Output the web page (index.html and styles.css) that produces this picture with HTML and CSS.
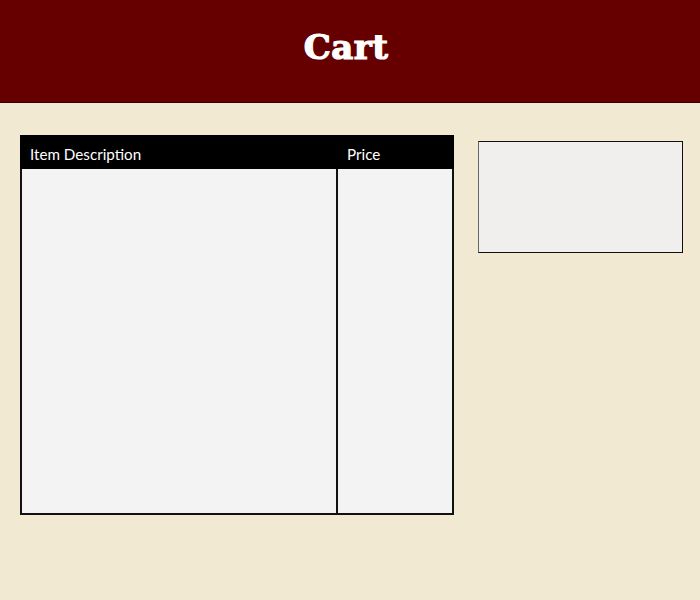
FILE: index.html
```html
<!DOCTYPE html>
<html>
<head>
<meta charset="utf-8">
<link rel="stylesheet" href="styles.css">
</head>
<body>
<header class="top">
  <h1 class="title">Cart</h1>
</header>
<main class="content">
  <table class="cart">
    <thead>
      <tr>
        <th class="desc">Item Description</th>
        <th class="price">Price</th>
      </tr>
    </thead>
    <tbody>
      <tr>
        <td class="desc"></td>
        <td class="price"></td>
      </tr>
    </tbody>
  </table>
  <div class="summary"></div>
</main>
</body>
</html>
```
FILE: styles.css
```css
html, body {
  margin: 0;
  padding: 0;
  background: #f2e9d2;
  height: 100%;
}
.top {
  height: 102px;
  background: #660000;
  border-bottom: 1px solid #3a0000;
  display: flex;
  align-items: center;
  justify-content: center;
}
.title {
  margin: 0;
  color: #fff;
  font-family: "DejaVu Serif", serif;
  font-weight: 900;
  font-size: 34px;
  letter-spacing: 0.5px;
  -webkit-text-stroke: 1.2px #fff;
  transform: translate(-4px, -4px);
}
.content {
  display: flex;
  align-items: flex-start;
  padding: 32px 0 0 20px;
  gap: 24px;
}
.cart {
  border-collapse: collapse;
  table-layout: fixed;
  width: 434px;
  border: 2px solid #111;
}
.cart th {
  background: #000;
  color: #fff;
  font-family: "Lato", sans-serif;
  font-weight: normal;
  font-size: 15.2px;
  line-height: 20px;
  text-align: left;
  height: 26px;
  padding: 4px 0 0 8px;
  border: 2px solid #000;
  vertical-align: middle;
}
.cart th.price {
  padding-left: 9px;
}
.cart td {
  background: #f3f3f3;
  height: 344px;
  border: 2px solid #111;
  padding: 0;
}
.cart th.desc {
  width: 306px;
}
.summary {
  margin-top: 6px;
  width: 203px;
  height: 110px;
  background: #f0efed;
  border: 1px solid #111;
  border-left-color: #666;
}
```
